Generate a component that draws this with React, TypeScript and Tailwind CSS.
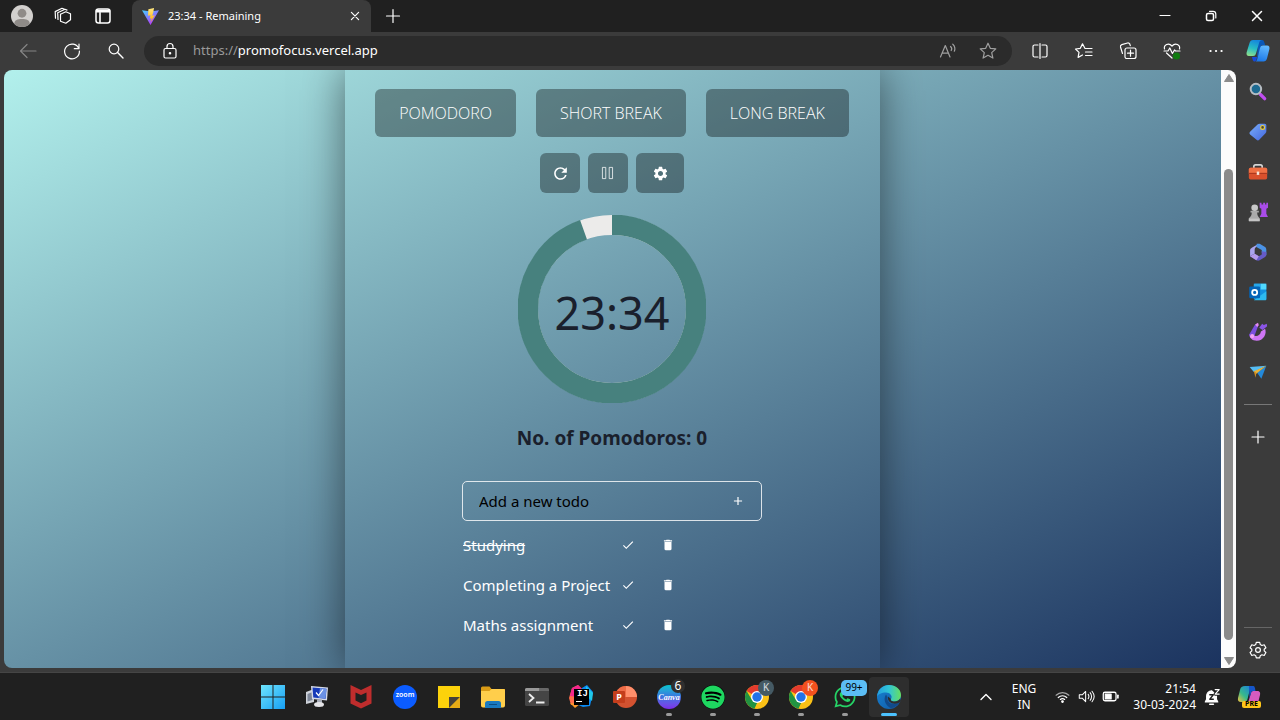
import { useState } from "react";
import type { ReactNode } from "react";
import {
  MdRefresh, MdSettings, MdDelete, MdCheck, MdAdd,
} from "react-icons/md";
import { FaSpotify, FaWhatsapp } from "react-icons/fa";

type P = { className?: string; children?: ReactNode };

function Line({ className = "size-5", children }: P) {
  return (
    <svg viewBox="0 0 20 20" className={className} fill="none" stroke="currentColor" strokeWidth="1.2" strokeLinecap="round" strokeLinejoin="round" aria-hidden="true">
      {children}
    </svg>
  );
}

function Pic({ className = "size-6", children }: P) {
  return (
    <svg viewBox="0 0 24 24" className={className} aria-hidden="true">
      {children}
    </svg>
  );
}

const star = "M10 2.200l2.300 5.100 5.500.6-4.100 3.700 1.200 5.500L10 14.300l-4.900 2.800 1.200-5.500L2.200 7.900l5.500-.6z";

function IconButton({ label, className = "", children }: { label: string; className?: string; children: ReactNode }) {
  return (
    <button type="button" aria-label={label} className={`flex shrink-0 items-center justify-center ${className}`}>
      {children}
    </button>
  );
}

function TitleBar() {
  return (
    <header className="flex h-8 bg-[#202020] text-white">
      <div className="flex w-[132px] items-center gap-5 pl-[11px]">
        <IconButton label="Profile">
          <Pic className="size-[22px]">
            <circle cx="12" cy="12" r="12" fill="#d2d0ce" />
            <circle cx="12" cy="9" r="4.8" fill="#8f8b88" />
            <path d="M3.500 20.400C4 16.500 7 15.400 12 15.400s8 1.100 8.500 5A12 12 0 0 1 3.500 20.400z" fill="#8f8b88" />
          </Pic>
        </IconButton>
        <IconButton label="Workspaces">
          <Line>
            <path d="M7.500 8.200l5.300-2.400 4.700 2v6l-4.700 3.400-5.300-2zM7.500 8.200v7M5 13.500l-.3-6.700 7.300-3.500 2 .8M2.500 12.200L2.200 5.600 9 2.300l2 .7" />
          </Line>
        </IconButton>
        <IconButton label="Tab actions">
          <Line>
            <rect x="3" y="3" width="14" height="14" rx="2.500" strokeWidth="1.500" />
            <path d="M3.500 4.500h13M3.500 5.800h13M7 7v9.500" strokeWidth="1.600" />
          </Line>
        </IconButton>
      </div>
      <div className="flex w-[239px] items-center rounded-t-lg bg-[#3b3b3b] pr-[10px] pl-[10px]">
        <Pic className="size-[17px] shrink-0">
          <defs>
            <linearGradient id="vite" x1="0" y1="0" x2=".6" y2="1"><stop stopColor="#41d1ff" /><stop offset="1" stopColor="#bd34fe" /></linearGradient>
            <linearGradient id="bolt" x1="0" y1="0" x2="0" y2="1"><stop stopColor="#ffea83" /><stop offset="1" stopColor="#ffa800" /></linearGradient>
          </defs>
          <path d="M0 3l12 2 12-2-12 21z" fill="url(#vite)" />
          <path d="M17 0L9 1.600 8.500 11l3.500-.8-1 5 2.600-.8-1.600 6 6-10-3.500.7 1.500-5.300z" fill="url(#bolt)" />
        </Pic>
        <span className="ml-[9px] grow text-[11px]">23:34 - Remaining</span>
        <IconButton label="Close tab">
          <Line className="size-[12px]"><path d="M4 4l12 12M16 4L4 16" strokeWidth="2" /></Line>
        </IconButton>
      </div>
      <div className="flex grow items-center pl-3">
        <IconButton label="New tab">
          <Line><path d="M10 3.500v13M3.500 10h13" /></Line>
        </IconButton>
      </div>
      <div className="flex items-center gap-[26px] pr-[13px]">
        <IconButton label="Minimize"><Line><path d="M5 9.500h10" /></Line></IconButton>
        <IconButton label="Restore">
          <Line>
            <rect x="5.500" y="7.500" width="7" height="7" rx="1.500" strokeWidth="1.500" />
            <path d="M8.500 5.300h3.500a2.800 2.800 0 0 1 2.800 2.800V12" />
          </Line>
        </IconButton>
        <IconButton label="Close"><Line><path d="M5.500 5.500l9 9M14.500 5.500l-9 9" strokeWidth="1.500" /></Line></IconButton>
      </div>
    </header>
  );
}

function CopilotMark({ className = "size-6" }: P) {
  return (
    <Pic className={className}>
      <defs>
        <linearGradient id="cpa" x1=".5" y1="0" x2=".2" y2="1"><stop stopColor="#1687dc" /><stop offset=".5" stopColor="#27bcc4" /><stop offset="1" stopColor="#8fe08a" /></linearGradient>
        <linearGradient id="cpb" x1=".6" y1="0" x2=".3" y2="1"><stop stopColor="#60b8ff" /><stop offset="1" stopColor="#1976e8" /></linearGradient>
      </defs>
      <path d="M12 1h4c1.500 0 2 1 2.500 3l.8 2.500h-4L11 20z" fill="#0a58b8" />
      <path d="M7 1h9c-1.500 0-2.300 1-2.800 2.600L10 14.500c-.5 1.700-1.400 2.500-3 2.500H3C.8 17 .2 15.300.6 13.500L3.500 4C4.100 2 5.200 1 7 1z" fill="url(#cpa)" />
      <path d="M17 6.500h4c2.200 0 2.800 1.700 2.400 3.500L21 19.500c-.6 2-1.700 3-3.500 3h-9c1.500 0 2.300-1 2.800-2.600L14 9c.5-1.700 1.400-2.500 3-2.500z" fill="url(#cpb)" />
      <path d="M6 18h5l-.5 2.500c-.5 1.400-1.200 2-2.200 2S6.500 21 6 18z" fill="#1748d8" />
    </Pic>
  );
}

function ToolBar() {
  return (
    <div className="flex h-[38px] items-center bg-[#3b3b3b] text-white">
      <div className="flex items-center gap-6 pr-[18px] pl-[18px]">
        <IconButton label="Back" className="text-[#858585]"><Line><path d="M18 10H2.500M9 3.500L2.500 10 9 16.500" /></Line></IconButton>
        <IconButton label="Reload"><Line><path d="M16.800 7.500A7.400 7.400 0 1 0 17.400 10M17 3v4.700h-4.700" /></Line></IconButton>
        <IconButton label="Search"><Line><circle cx="8" cy="8" r="4.800" /><path d="M11.600 11.600L17 17" strokeWidth="1.400" /></Line></IconButton>
      </div>
      <form className="flex h-[30px] grow items-center rounded-full bg-[#2b2b2b] pr-[14px] pl-4">
        <Line className="size-5 shrink-0">
          <rect x="4" y="7.500" width="12" height="9.500" rx="1.500" />
          <path d="M7 7.500V5.500a3 3 0 0 1 6 0v2" />
          <circle cx="10" cy="12.200" r=".7" fill="currentColor" />
        </Line>
        <a href="https://promofocus.vercel.app" className="ml-[13px] grow text-[13px]">
          <span className="text-[#9a9a9a]">https://</span>promofocus.vercel.app
        </a>
        <div className="flex gap-5 text-[#a0a0a0]">
          <IconButton label="Read aloud"><Line><path d="M2.500 16L7.300 4.500 12 16M4 12.200h6.500M12.500 5.500c1.300 1 1.300 3 .7 4M14.800 3.200c2.500 2 2.400 5.500 1.500 7" /></Line></IconButton>
          <IconButton label="Add to favorites"><Line><path d={star} /></Line></IconButton>
        </div>
      </form>
      <div className="flex items-center gap-6 pr-[10px] pl-[18px]">
        <IconButton label="Split screen"><Line><path d="M8 4H4.500A1.500 1.500 0 0 0 3 5.500v9A1.500 1.500 0 0 0 4.500 16H8M12 4h3.500A1.500 1.500 0 0 1 17 5.500v9a1.500 1.500 0 0 1-1.500 1.500H12M10 2.500v15" /></Line></IconButton>
        <IconButton label="Favorites"><Line><path d="M12.500 7.500H11L8.500 2.800 6.300 7.300l-4.800.7L5 11.400l-.9 5 4.400-2.400M13 7.500h5M11.500 11H18M11.500 14.500H18" /></Line></IconButton>
        <IconButton label="Collections"><Line><path d="M4.500 12.500L2.500 6a2 2 0 0 1 1.300-2.400L9.500 2a2 2 0 0 1 2.500 1.500l.3 1.200M7 15V9a2 2 0 0 1 2-2h7a2 2 0 0 1 2 2v6.500a2 2 0 0 1-2 2H9A2 2 0 0 1 7 15zM12.500 9.200v6M9.500 12.200h6" /></Line></IconButton>
        <IconButton label="Browser essentials">
          <Line>
            <path d="M2.500 8C1.500 4 6.500 1 10 5c3.500-4 8.500-1 7.500 3M4.500 12L10 17M2 10h4l1.800-3 2.600 5.500L12.500 9l1 1H18" />
            <circle cx="14.500" cy="15" r="3.600" fill="#0f7b0f" stroke="none" />
          </Line>
        </IconButton>
        <IconButton label="More"><Line><path d="M4.500 10h.1M10 10h.1M15.500 10h.1" strokeWidth="2.200" /></Line></IconButton>
        <IconButton label="Copilot" className="-ml-1"><CopilotMark /></IconButton>
      </div>
    </div>
  );
}

const modes = ["POMODORO", "SHORT BREAK", "LONG BREAK"];

function Ring() {
  return (
    <div className="mt-[22px] grid size-[188px] place-items-center">
      <svg viewBox="0 0 188 188" className="col-start-1 row-start-1 size-full" fill="none" aria-hidden="true">
        <circle cx="94" cy="94" r="84" stroke="#ecebea" strokeWidth="20" />
        <circle cx="94" cy="94" r="84.200" stroke="#47817e" strokeWidth="20.600" pathLength="1000" strokeDasharray="945 55" transform="rotate(-90 94 94)" />
      </svg>
      <span className="col-start-1 row-start-1 pt-[6px] text-[45px] leading-none text-[#1a202c]">23:34</span>
    </div>
  );
}

function Todos() {
  const [todos, setTodos] = useState([
    { text: "Studying", done: true },
    { text: "Completing a Project", done: false },
    { text: "Maths assignment", done: false },
  ]);
  const [draft, setDraft] = useState("");
  return (
    <section className="mt-[31px] w-[300px]">
      <form
        className="flex h-10 items-center rounded-[5px] border border-white/80 pr-4 pl-4"
        onSubmit={(e) => {
          e.preventDefault();
          if (draft) setTodos([...todos, { text: draft, done: false }]);
          setDraft("");
        }}
      >
        <input
          aria-label="Add a new todo"
          placeholder="Add a new todo"
          value={draft}
          onChange={(e) => setDraft(e.target.value)}
          className="min-w-0 grow bg-transparent text-[15px] text-black outline-none placeholder:text-black"
        />
        <button type="submit" aria-label="Add" className="text-white"><MdAdd className="size-[14px]" stroke="currentColor" /></button>
      </form>
      <ul className="text-white">
        {todos.map((t, i) => (
          <li key={i} className="flex h-10 items-center pt-2 pl-px">
            <span className={`w-[158px] whitespace-nowrap text-[15px] ${t.done ? "line-through" : ""}`}>{t.text}</span>
            <button type="button" aria-label={`Complete ${t.text}`} className="w-[14px]" onClick={() => setTodos(todos.map((x, j) => (j === i ? { ...x, done: !x.done } : x)))}>
              <MdCheck className="size-[14px]" />
            </button>
            <button type="button" aria-label={`Delete ${t.text}`} className="ml-[26px]" onClick={() => setTodos(todos.filter((_, j) => j !== i))}>
              <MdDelete className="size-[14px]" />
            </button>
          </li>
        ))}
      </ul>
    </section>
  );
}

function Page() {
  return (
    <main className="flex min-w-0 grow justify-center overflow-hidden rounded-l-lg bg-linear-to-br/srgb from-[#b2f0ec] to-[#1b335f]">
      <div className="flex w-[535px] flex-col items-center pt-[19px] pr-px shadow-[0_0_40px_rgba(0,0,0,0.5)]">
        <div className="flex gap-5">
          {modes.map((m) => (
            <button key={m} type="button" className="h-12 rounded-md bg-black/35 px-6 font-['Open_Sans',sans-serif] text-[16px] font-light text-white">{m}</button>
          ))}
        </div>
        <div className="mt-4 flex gap-2 text-white">
          <IconButton label="Restart" className="h-10 w-10 rounded-md bg-black/35"><MdRefresh className="size-[19px]" /></IconButton>
          <IconButton label="Pause" className="h-10 w-10 rounded-md bg-black/35">
            <Line className="size-4"><path d="M3.500 3h3.700v14H3.500zM12 3h3.700v14H12z" strokeOpacity=".8" /></Line>
          </IconButton>
          <IconButton label="Settings" className="h-10 w-12 rounded-md bg-black/35"><MdSettings className="size-[17px]" /></IconButton>
        </div>
        <Ring />
        <h1 className="mt-[23px] text-[19px] leading-6 font-bold text-[#1a202c]">No. of Pomodoros: 0</h1>
        <Todos />
      </div>
    </main>
  );
}

function ScrollBar() {
  return (
    <div className="flex w-[15px] shrink-0 flex-col items-center rounded-r-lg bg-[#fcfcfc] pt-[4px] pb-[3px]" aria-hidden="true">
      <svg viewBox="0 0 10 8" className="h-2 w-[10px]"><path d="M5 0.500l4.500 7h-9z" fill="#8b8b8b" stroke="#8b8b8b" strokeLinejoin="round" /></svg>
      <div className="mt-[87px] w-[9px] grow rounded-full bg-[#8b8b8b]" />
      <svg viewBox="0 0 10 8" className="mt-[17px] h-2 w-[10px]"><path d="M5 7.500l4.500-7h-9z" fill="#8b8b8b" stroke="#8b8b8b" strokeLinejoin="round" /></svg>
    </div>
  );
}

function SideBar() {
  return (
    <aside className="flex w-11 shrink-0 flex-col items-center bg-[#3b3b3b] pt-3 text-white">
      <div className="flex flex-col gap-5">
        <IconButton label="Search">
          <Pic className="size-5">
            <path d="M15 15l5 5" stroke="#c04df0" strokeWidth="4" strokeLinecap="round" />
            <circle cx="9.500" cy="8.500" r="6.300" fill="#1d6a91" stroke="#b5bcc2" strokeWidth="2.400" />
          </Pic>
        </IconButton>
        <IconButton label="Shopping">
          <Pic className="size-5">
            <defs><linearGradient id="tag" x1="0" y1="0" x2="1" y2="1"><stop stopColor="#79aefa" /><stop offset="1" stopColor="#4466dd" /></linearGradient></defs>
            <path d="M14 2h6a2 2 0 0 1 2 2v7c0 1-.3 1.700-1 2.400l-7.500 8c-1 1-2.200 1-3.200 0L2.500 15c-1-1-1-2.200 0-3.200L11.500 3c.7-.7 1.500-1 2.500-1z" fill="url(#tag)" />
            <circle cx="17.500" cy="6.500" r="2.300" fill="#4a4635" stroke="#e7cd40" strokeWidth="1.400" />
          </Pic>
        </IconButton>
        <IconButton label="Tools">
          <Pic className="size-5">
            <path d="M7 8V5.500A2 2 0 0 1 9 3.500h6a2 2 0 0 1 2 2V8" stroke="#d5d5d5" strokeWidth="2" fill="none" />
            <rect x="1" y="7" width="22" height="14" rx="2" fill="#d9502c" />
            <path d="M1 9a2 2 0 0 1 2-2h18a2 2 0 0 1 2 2v5H1z" fill="#ef7044" />
            <path d="M1 13h22v1.300H1z" fill="#a7351c" /><path d="M10.500 11.500h3v4h-3z" fill="#f5e5da" />
          </Pic>
        </IconButton>
        <IconButton label="Games">
          <Pic className="size-5">
            <path d="M14 1h2.200v2h2V1h2.300v2h1.500V1H24v6l-2 1v6l2 4H14l2-4V8l-2-1z" fill="#a94ce8" />
            <circle cx="8" cy="7" r="4" fill="#c9c9c9" />
            <path d="M3 10.500h10v2h-2c0 3 1 5 3 7v3.500H1v-3.500c2.500-2 3.500-4 3.500-7H3z" fill="#aaa" />
            <path d="M1 20h13v3H1z" fill="#c4c4c4" />
          </Pic>
        </IconButton>
        <IconButton label="Microsoft 365">
          <Pic className="size-5">
            <path d="M13 2L5 6.500C3.300 7.500 2.500 8.500 2.500 10v7l5.500-3V9.500c0-2 1-3 2.500-4z" fill="#aaa4ee" />
            <path d="M10.500 2H14l6.500 4c1 .8 1.500 2 1.500 4v6l-5.500-3V9.500L10 6z" fill="#4b92e5" />
            <path d="M22 12v3c0 1.500-.7 2.500-2 3.200L14 22c-1.300.6-2.500.6-4 0l-7.500-5L8 14l5 3 3.500-2v-4z" fill="#655bc7" />
            <path d="M2.500 17L8 14l5 3-3 5z" fill="#b59bea" />
          </Pic>
        </IconButton>
        <IconButton label="Outlook">
          <Pic className="size-5">
            <rect x="7" y="2" width="15" height="19" rx="1.500" fill="#1490df" /><path d="M15 2h7v7h-7z" fill="#50d9ff" /><path d="M7 2h8v7H7z" fill="#28a8ea" />
            <path d="M7 22l15-11v10a1 1 0 0 1-1 1z" fill="#2dbaf0" />
            <rect x="1.500" y="5.500" width="13" height="14" rx="1.500" fill="#0364b8" /><circle cx="8" cy="12.500" r="3" stroke="#fff" strokeWidth="2.200" fill="none" />
          </Pic>
        </IconButton>
        <IconButton label="Designer">
          <Pic className="size-5">
            <path d="M20.500 8c2.500 6-2 14.500-10 14.500C5 22.500 1.500 19 2 15l5 .5c1.500 2.500 8 1.500 8.500-4z" fill="#cf76f5" />
            <path d="M1.500 15L8.500 3l3.500 2-4.500 12.500c-1.500 3-6.500 1-6-2.500z" fill="#7c4fe0" />
            <path d="M8.500 3L12 1l1 3-2 2z" fill="#e28bf3" />
            <path d="M13.500 7L17 2l2 1.500L22.500 2 23 5l-5.500 4.500z" fill="#8b55e7" />
            <circle cx="5" cy="17" r="2.500" fill="#f2a0f5" />
          </Pic>
        </IconButton>
        <IconButton label="Drop">
          <Pic className="size-5">
            <path d="M11 13L22 4.500 16 20z" fill="#2389da" /><path d="M2 6l20-1.500L7 12z" fill="#55bdf3" /><path d="M7 11L22 4.500 10 14z" fill="#e9b43b" /><path d="M7 11l3 2-1 6z" fill="#d58f1d" />
          </Pic>
        </IconButton>
      </div>
      <hr className="mt-[22px] w-7 border-[#777]" />
      <IconButton label="Customize" className="mt-[22px]"><Line><path d="M10 4v12M4 10h12" /></Line></IconButton>
      <div className="grow" />
      <hr className="w-7 border-[#666]" />
      <IconButton label="Settings" className="mt-[12px] mb-[8px]">
        <Line>
          <path d="M8.300 2.300h3.400l.6 2.300 1.600.9 2.300-.7 1.700 3-1.700 1.500v1.600l1.700 1.600-1.700 3-2.300-.7-1.600.9-.6 2.200H8.300l-.6-2.200-1.600-.9-2.300.7-1.700-3 1.700-1.600V9.300L2.100 7.800l1.700-3 2.300.7 1.600-.9z" />
          <circle cx="10" cy="10" r="2.400" />
        </Line>
      </IconButton>
    </aside>
  );
}

function Chrome({ badge }: { badge: string }) {
  return (
    <>
      <Pic>
        <circle cx="12" cy="12" r="12" fill="#fbc116" />
        <path d="M12 12L1.600 6A12 12 0 0 1 22.400 6z" fill="#e33b2e" /><path d="M12 0a12 12 0 0 1 10.400 6H12z" fill="#e33b2e" />
        <path d="M1.600 6L7 15l5 3-3 5.600A12 12 0 0 1 1.600 6z" fill="#229342" /><path d="M7 14l5 3.500-2.500 6.200L3 17z" fill="#229342" />
        <circle cx="12" cy="12" r="6" fill="#fff" /><circle cx="12" cy="12" r="4.700" fill="#2373e8" />
      </Pic>
      <span className={`absolute -top-[5px] left-[13px] flex size-4 items-center justify-center rounded-full text-[10px] text-white/80 ${badge}`}>K</span>
    </>
  );
}

function Task({ label, running, active, children }: { label: string; running?: boolean; active?: boolean; children: ReactNode }) {
  return (
    <button type="button" aria-label={label} className={`flex h-10 w-10 flex-col items-center rounded-[4px] pt-2 ${active ? "bg-[#2e2e2e]" : ""}`}>
      <span className="relative block size-6">{children}</span>
      {running && <span className="mt-1 h-[3px] w-[6px] rounded-full bg-[#9a9a9a]" />}
      {active && <span className="mt-1 h-[3px] w-4 rounded-full bg-[#4cc2ff]" />}
    </button>
  );
}

function TaskBar() {
  return (
    <footer className="flex h-12 items-center border-t border-[#454545] bg-[#202020] text-white">
      <nav className="flex grow justify-end gap-1" aria-label="Taskbar">
        <Task label="Start">
          <Pic>
            <defs><linearGradient id="win" gradientUnits="userSpaceOnUse" x1="0" y1="0" x2="24" y2="24"><stop stopColor="#6ee4fc" /><stop offset="1" stopColor="#169ff5" /></linearGradient></defs>
            <path d="M0 0h11.500v11.500H0zM12.500 0H24v11.500H12.500zM0 12.500h11.500V24H0zM12.500 12.500H24V24H12.500z" fill="url(#win)" />
          </Pic>
        </Task>
        <Task label="Remote desktop">
          <Pic>
            <path d="M1 7l8-3v13l-8 2z" fill="#cfd3da" /><path d="M2.500 9l5-2v8l-5 1.500z" fill="#7d8698" />
            <path d="M6 1l17 1.500-1 13-15-1.500z" fill="#d5dae8" /><path d="M7.500 2.500l14 1.300-.8 10L8.300 12.500z" fill="#1539b8" /><path d="M15 3.200l6.300.6-.7 9.700-7-.7z" fill="#6b91e5" />
            <path d="M11 7.500l2.500 3L18 4.500" stroke="#fff" strokeWidth="1.200" fill="none" /><path d="M12 14.500h5v4h-5z" fill="#a8adb8" /><ellipse cx="14" cy="19.500" rx="5" ry="2.500" fill="#e4e4e7" />
          </Pic>
        </Task>
        <Task label="McAfee"><Pic><path d="M1.500 0L12 5 22.500 0v18.500L12 23.500 1.500 18.500z" fill="#bf2d2d" /><path d="M6.500 7.500L12 10l5.500-2.500v8L12 18.300l-5.500-2.800z" fill="#202020" /></Pic></Task>
        <Task label="Zoom"><span className="flex size-6 items-center justify-center rounded-full bg-[#0b5cff] pb-[2px] text-[7px] font-semibold">zoom</span></Task>
        <Task label="Sticky Notes"><Pic><path d="M1 1h22v11L12 23H1z" fill="#fcd20b" /><path d="M12 12h11L12 23z" fill="#45413a" /><path d="M23 12v11H12z" fill="#e6ab16" /></Pic></Task>
        <Task label="File Explorer"><Pic><path d="M0 3A1.500 1.500 0 0 1 1.500 1.500h7L10.500 4H24v6H0z" fill="#d99b16" /><path d="M0 6h8.500l2-2h12A1.500 1.500 0 0 1 24 5.500v15a2 2 0 0 1-2 2H2a2 2 0 0 1-2-2z" fill="#ffce4b" /><path d="M4 23v-4.500A2.500 2.500 0 0 1 6.500 16h11a2.500 2.500 0 0 1 2.500 2.500V23z" fill="#1979bf" /><path d="M8 19.500h8" stroke="#0b4d83" /></Pic></Task>
        <Task label="Terminal"><Pic><rect y="3" width="24" height="18" rx="1.500" fill="#454545" /><path d="M0 4.500A1.500 1.500 0 0 1 1.500 3h13v3H0z" fill="#999" /><path d="M14.500 3h8A1.500 1.500 0 0 1 24 4.500V6h-9.500z" fill="#686868" /><path d="M4 9l4.500 4L4 17M11 17.500h8.500" stroke="#eee" strokeWidth="1.800" fill="none" /></Pic></Task>
        <Task label="IntelliJ IDEA">
          <Pic><path d="M0 13l3-10 6-3 5 5-5 14-7 1z" fill="#ff6b4a" /><path d="M3 3l6-3 5 5-4 7-9-1z" fill="#f4268e" /><path d="M13 3l5-3 6 7-3 14-7 1-7-3z" fill="#0a8cf5" /><path d="M17 1l7 7-1 8-6-5z" fill="#20c8e8" /><path d="M1 18l5 5 5-4z" fill="#fb9b2a" /></Pic>
          <span className="absolute top-1 left-[5px] flex h-[16px] w-[15px] flex-col bg-black pl-[2px] font-mono text-[9px] leading-[10px] font-bold">IJ<span className="mt-[2px] h-px w-[6px] bg-white" /></span>
        </Task>
        <Task label="PowerPoint">
          <Pic><circle cx="13" cy="12" r="11" fill="#d35230" /><path d="M13 1a11 11 0 0 1 11 11H13z" fill="#ff8f6b" /><path d="M13 1A11 11 0 0 0 2 12h11z" fill="#ed6c47" /></Pic>
          <span className="absolute top-[6px] left-0 flex h-3 w-[12px] items-center justify-center rounded-[1px] bg-[#c43e1c] text-[9px] font-bold">P</span>
        </Task>
        <Task label="Canva, 6 notifications" running>
          <span className="flex size-6 items-center justify-center rounded-full bg-linear-to-b from-[#00c4cc] via-[#3972e0] to-[#7d2ae8] pt-[2px] font-['Liberation_Serif',serif] text-[8px] leading-none font-bold italic">Canva</span>
          <span className="absolute -top-[6px] left-[14px] flex size-[14px] items-center justify-center rounded-full bg-[#303030] text-[12px] leading-none">6</span>
        </Task>
        <Task label="Spotify" running><span className="grid size-6 place-items-center rounded-full bg-black"><FaSpotify className="size-6 text-[#1ed760]" /></span></Task>
        <Task label="Chrome, profile one" running><Chrome badge="bg-[#455a64]" /></Task>
        <Task label="Chrome, profile two" running><Chrome badge="bg-[#f4511e]" /></Task>
        <Task label="WhatsApp" running>
          <FaWhatsapp className="size-6 text-[#25d366]" />
          <span className="absolute -top-[5px] left-[8px] flex h-4 w-[26px] items-center justify-center rounded-[5px] bg-[#5bbdf5] text-[10px] text-black">99+</span>
        </Task>
        <Task label="Edge" active>
          <Pic>
            <defs>
              <linearGradient id="ea" x1="0" y1=".3" x2="1" y2=".3"><stop stopColor="#249ee0" /><stop offset=".5" stopColor="#31c5d5" /><stop offset="1" stopColor="#67df5e" /></linearGradient>
              <linearGradient id="eb" x1="0" y1="0" x2="1" y2="1"><stop stopColor="#1682d2" /><stop offset="1" stopColor="#125aa5" /></linearGradient>
            </defs>
            <circle cx="12" cy="12" r="12" fill="url(#eb)" />
            <path d="M0 11.500C1 4 6 0 12 0c7 0 12 4.500 12 10 0 4-3 6.500-6.500 6.500-2.700 0-4.500-1.200-3.500-2.500 2-3-1-6.500-5-6.500-4.500 0-8 2-9 4z" fill="url(#ea)" />
            <path d="M9 9.500c-3 4.500-1 11 5 13.700 4-.7 7-3 8.500-5.700-7 3.500-13 .5-12-5.500z" fill="#114a8b" />
            <path d="M14 14c-1 1.300.8 2.500 3.500 2.500 2.300 0 4.300-1 5.500-2.800l1 1.800-1.500 2c-6 3-12.500 0-11.500-6z" fill="#2e2e2e" />
          </Pic>
        </Task>
      </nav>
      <div className="flex w-[371px] shrink-0 items-center pl-[67px] text-[12px] leading-4">
        <IconButton label="Show hidden icons"><Line><path d="M5 12.500l5-5 5 5" strokeWidth="1.400" /></Line></IconButton>
        <div className="ml-3 w-8 text-center">ENG<br />IN</div>
        <div className="ml-[14px] flex gap-[7px]">
          <Line className="size-[17px]"><path d="M2.500 8.500a10.500 10.500 0 0 1 15 0" strokeOpacity=".6" strokeWidth="1.400" /><path d="M5 11.200a7 7 0 0 1 10 0M7.500 13.500a3.500 3.500 0 0 1 5 0" strokeWidth="1.400" /><circle cx="10" cy="16" r="1" fill="currentColor" /></Line>
          <Line className="size-[17px]"><path d="M1.500 8v4H5l4 4V4L5 8zM12 7.500c1 1.500 1 3.500 0 5M14.300 5.500c2 2.700 2 6.300 0 9M16.500 3.800c3 3.700 3 8.700 0 12.400" /></Line>
          <Line className="size-[17px]"><rect x="1.500" y="5" width="15" height="10" rx="2" strokeWidth="1.500" /><path d="M3.800 7.200h7v5.600h-7z" fill="currentColor" /><path d="M18.700 8.500v3" strokeWidth="2" /></Line>
        </div>
        <div className="ml-[9px] w-[68px] text-right whitespace-nowrap">21:54<br />30-03-2024</div>
        <div className="ml-[7px] flex items-center">
          <Line className="size-[18px]"><path d="M2.500 15.500h14L15 12.500V8L9.500 3A5.800 5.800 0 0 0 4 9v3.500z" fill="currentColor" /><path d="M7.500 18h4" strokeWidth="1.800" /><path d="M7.500 7.500h4l-4 5h4" stroke="#202020" strokeWidth="1.400" /><path d="M13.500 1.800h4.500l-4.500 5H18" stroke="#202020" strokeWidth="3.500" /><path d="M13.500 1.800h4.500l-4.500 5H18" strokeWidth="1.300" /></Line>
        </div>
        <span className="relative ml-4 block size-6">
          <Pic className="size-6">
            <defs><linearGradient id="pr" x1="0" y1="1" x2="1" y2="0"><stop stopColor="#f4c33b" /><stop offset=".4" stopColor="#36b98c" /><stop offset="1" stopColor="#1878e8" /></linearGradient></defs>
            <path d="M8 1h8c-2 0-2.500 1-3 3l-2.500 10c-.5 2-1.400 3-3 3H4c-2.500 0-3.500-1.500-3-4l2-8c.7-3 2-4 5-4z" fill="url(#pr)" /><path d="M16 6h4c3 0 3.500 2 3 4l-2 8h-10l3-10c.3-1.200 1-2 2-2z" fill="#d65bc0" />
            <path d="M12 1h4c1.500 0 2 1 2.500 5H16c-1 0-1.700.8-2 2l-1.500 5z" fill="#1555c8" />
          </Pic>
          <span className="absolute top-4 left-[5px] flex h-[7px] w-[19px] items-center justify-center rounded-[2px] bg-[#ffc61a] text-[7px] font-bold text-black">PRE</span>
        </span>
      </div>
    </footer>
  );
}

export default function App() {
  return (
    <div className="flex min-h-screen flex-col bg-[#3b3b3b] font-['Noto_Sans','Segoe_UI',sans-serif]">
      <TitleBar />
      <ToolBar />
      <div className="flex grow pb-1 pl-1">
        <Page />
        <ScrollBar />
        <SideBar />
      </div>
      <TaskBar />
    </div>
  );
}
